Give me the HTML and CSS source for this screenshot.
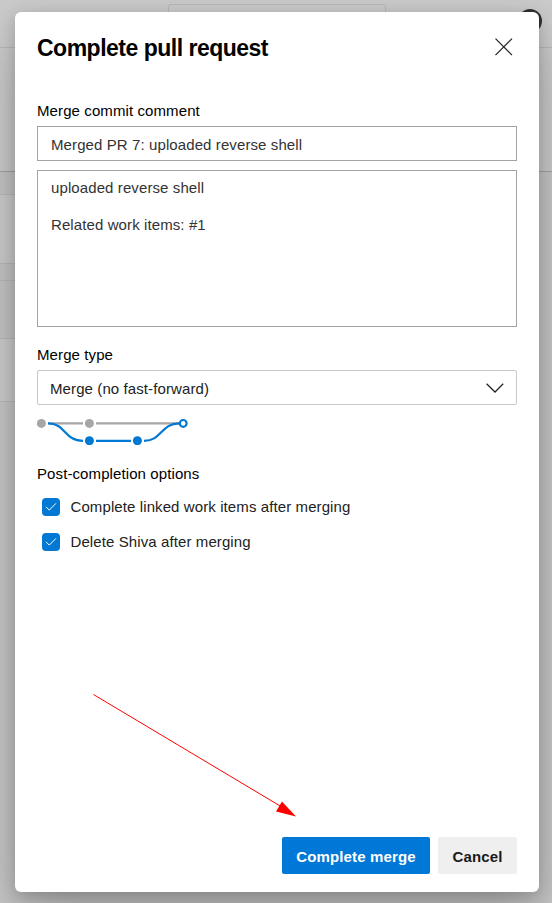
FILE: index.html
```html
<!DOCTYPE html>
<html lang="en">
<head>
<meta charset="utf-8">
<title>Complete pull request</title>
<link rel="stylesheet" href="styles.css">
</head>
<body>
<div class="page" aria-hidden="true">
  <div class="topbar"><div class="search"></div><div class="avatar"></div></div>
  <div class="summary"></div>
  <div class="column">
    <div class="strip"></div>
    <div class="card card-a"></div>
    <div class="strip-b"></div>
    <div class="card-b"></div>
    <div class="card card-c"></div>
  </div>
</div>
<main class="dialog" role="dialog" aria-labelledby="title">
  <header class="header">
    <h1 class="title" id="title">Complete pull request</h1>
    <button class="close" aria-label="Close"><svg width="18" height="18" viewBox="0 0 18 18"><path d="M.5.7 17 17.2M17 .7.5 17.2" fill="none" stroke="#222" stroke-width="1.2"/></svg></button>
  </header>
  <div class="content">
    <div class="label">Merge commit comment</div>
    <div class="input">Merged PR 7: uploaded reverse shell</div>
    <div class="textarea"><p>uploaded reverse shell</p><p>Related work items: #1</p></div>
    <div class="label label-type">Merge type</div>
    <div class="select"><span>Merge (no fast-forward)</span><svg width="18" height="10" viewBox="0 0 18 10"><path d="M.6.8 9 9 17.2.8" fill="none" stroke="#222" stroke-width="1.25"/></svg></div>
    <svg class="graph" width="152" height="30" viewBox="0 0 152 30">
      <g fill="none" stroke-width="2.2">
        <path d="M11 8.4H46M59 8.4H142" stroke="#a6a6a6"/>
        <path d="M11 8.4C29 8.4 27 25.8 46 25.8M59 25.8H94M107 25.8C125 25.8 124 8.4 142 8.4" stroke="#0078d4"/>
        <circle cx="146.2" cy="8.4" r="3.4" stroke="#0078d4"/>
      </g>
      <g fill="#a6a6a6"><circle cx="4.4" cy="8.4" r="4.5"/><circle cx="52.4" cy="8.4" r="4.5"/></g>
      <g fill="#0078d4"><circle cx="52.4" cy="25.8" r="4.5"/><circle cx="100.4" cy="25.8" r="4.5"/></g>
    </svg>
    <div class="label label-post">Post-completion options</div>
    <div class="option"><span class="check"><svg width="12" height="9" viewBox="0 0 12 9"><path d="M1 4.8 4.3 8.1 11 1.3" fill="none" stroke="#fff"/></svg></span><span>Complete linked work items after merging</span></div>
    <div class="option"><span class="check"><svg width="12" height="9" viewBox="0 0 12 9"><path d="M1 4.8 4.3 8.1 11 1.3" fill="none" stroke="#fff"/></svg></span><span>Delete Shiva after merging</span></div>
    <svg class="arrow" width="204" height="126" viewBox="0 0 204 126"><path d="M.5 1.5 188 113.5" stroke="red" fill="none"/><path d="M203 123.500 183 118.500 189 108.500Z" fill="red"/></svg>
  </div>
  <footer class="footer"><button class="btn primary">Complete merge</button><button class="btn">Cancel</button></footer>
</main>
</body>
</html>
```
FILE: styles.css
```css
* { box-sizing: border-box; }
body {
  margin: 0;
  width: 552px;
  height: 903px;
  display: grid;
  overflow: hidden;
  font: 15px/18px "Liberation Sans", sans-serif;
  letter-spacing: .1px;
  color: #000;
}
.page, .dialog { grid-area: 1 / 1; }
.page { display: flex; flex-direction: column; background: #c7c7c7; }
.topbar {
  height: 48px;
  background: #cbcbcb;
  border-bottom: 1px solid #b9b9b9;
  display: flex;
  justify-content: space-between;
  padding: 4px 10px 0 168px;
}
.search { width: 218px; height: 30px; border: 1px solid #b8b8b8; border-radius: 3px; background: #cdcdcd; }
.avatar { width: 24px; height: 24px; margin-top: 5px; border-radius: 50%; background: #303030; }
.summary { height: 124px; background: #cbcbcb; border-bottom: 1px solid #a3a3a3; }
.column { width: 500px; }
.strip { height: 23px; background: #c5c5c5; border-bottom: 1px solid #bababa; }
.card { background: #cccccc; border-bottom: 1px solid #b9b9b9; }
.card-a { height: 69px; }
.strip-b { height: 17px; background: #c5c5c5; border-bottom: 1px solid #b9b9b9; }
.card-b { height: 58px; background: #c5c5c5; border-bottom: 1px solid #b9b9b9; }
.card-c { height: 63px; }
.dialog {
  margin: 12px 13px 11px 15px;
  padding: 0 22px 18px;
  display: flex;
  flex-direction: column;
  background: #fff;
  border-radius: 6px;
  box-shadow: 0 25.6px 57.6px rgba(0,0,0,.22), 0 4.8px 14.4px rgba(0,0,0,.18);
}
.header { display: flex; justify-content: space-between; padding-top: 20px; height: 90px; }
.title { margin: 0; font-size: 23px; line-height: 32px; letter-spacing: -.5px; }
.close { align-self: flex-start; margin: 6px 4px 0 0; padding: 0; border: 0; background: none; display: flex; }
.content { flex: 1; display: flex; flex-direction: column; }
.input {
  height: 35px;
  margin: 6px 0 9px;
  padding: 9px 13px;
  border: 1px solid #a3a3a3;
  color: #333;
}
.textarea { height: 157px; padding: 8px 13px; border: 1px solid #a3a3a3; color: #333; }
.textarea p { margin: 0 0 19px; }
.label-type { margin-top: 19px; }
.select {
  display: flex;
  align-items: center;
  justify-content: space-between;
  height: 35px;
  margin-top: 6px;
  padding: 2px 12px 0;
  border: 1px solid #c8c8c8;
  border-radius: 2px;
  color: #222;
}
.select svg { margin-top: -2px; }
.graph { margin-top: 10px; }
.label-post { margin: 20px 0 6px; }
.option { display: flex; align-items: center; height: 35px; padding-left: 5px; gap: 10.5px; color: #222; }
.check { width: 18px; height: 18px; border-radius: 4px; background: #0078d4; display: flex; align-items: center; justify-content: center; }
.arrow { margin: 134px 0 0 56px; }
.footer { display: flex; justify-content: flex-end; gap: 8px; }
.btn {
  height: 37px;
  padding: 2px 14px 0;
  border: 0;
  border-radius: 2px;
  background: #efefef;
  color: #1a1a1a;
  font: bold 15px "Liberation Sans", sans-serif;
  letter-spacing: .14px;
  width: 79px;
}
.primary { width: 148px; background: #0078d7; color: #fff; }
```
